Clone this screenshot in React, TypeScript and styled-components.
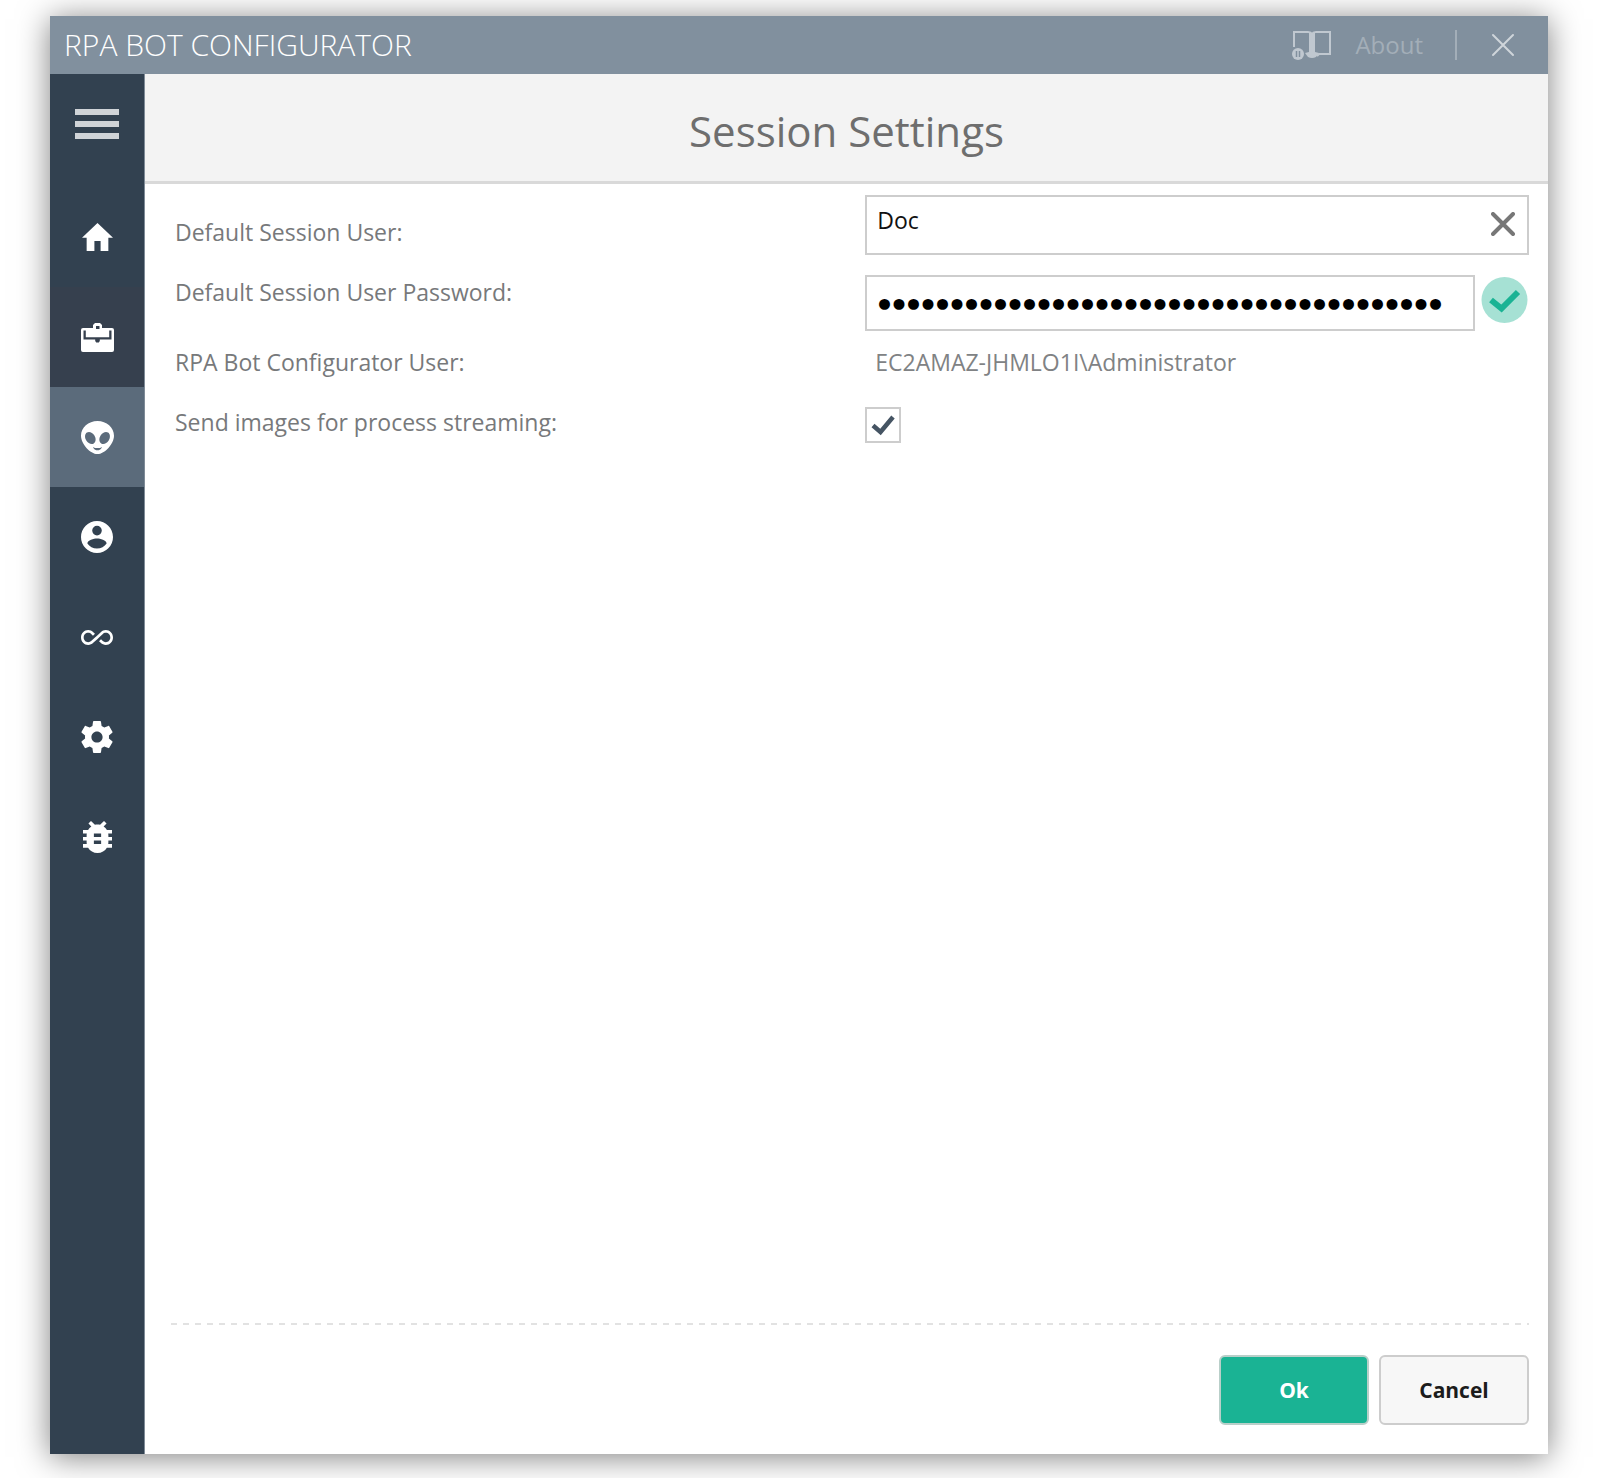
import React, { useState } from "react";
import styled, { createGlobalStyle } from "styled-components";

const GlobalStyle = createGlobalStyle`
  *, *::before, *::after { box-sizing: border-box; }
  body { margin: 0; background: #fff; }
  body, button, input { font-family: "Open Sans", "Noto Sans", sans-serif; }
`;

const Page = styled.div`
  display: flex;
  min-height: 100vh;
  padding: 16px 50px 24px;
`;

const Window = styled.div`
  flex: 1;
  display: flex;
  flex-direction: column;
  background: #fff;
  box-shadow: 0 3px 30px rgba(0, 0, 0, 0.5);
`;

const TitleBar = styled.header`
  display: flex;
  align-items: center;
  height: 58px;
  padding: 0 33px 0 14px;
  background: #81909e;
`;

const AppName = styled.div`
  flex: 1;
  font-size: 30px;
  font-weight: 300;
  line-height: 40px;
  color: #fff;
`;

const TitleLink = styled.a`
  display: flex;
  align-items: center;
  gap: 23px;
  font-size: 24px;
  line-height: 34px;
  color: #a3aeb8;
  text-decoration: none;
`;

const Separator = styled.span`
  width: 2px;
  height: 30px;
  margin: 0 34px 0 32px;
  background: #a3aeb8;
`;

const IconButton = styled.button`
  display: grid;
  place-items: center;
  padding: 0;
  border: 0;
  background: none;
  cursor: pointer;
`;

const Body = styled.div`
  flex: 1;
  display: flex;
`;

const Sidebar = styled.nav`
  display: flex;
  flex-direction: column;
  flex: none;
  width: 95px;
  border-right: 1px solid #7f8b97;
  background: #324150;
`;

const MenuButton = styled.button`
  display: flex;
  flex-direction: column;
  align-items: center;
  justify-content: center;
  gap: 6px;
  height: 113px;
  padding: 0 0 14px;
  border: 0;
  background: none;
  cursor: pointer;
`;

const MenuBar = styled.span`
  width: 44px;
  height: 6px;
  background: #d0d4d8;
`;

const NavItem = styled.button<{ $bg?: string }>`
  display: grid;
  place-items: center;
  height: 100px;
  padding: 0;
  border: 0;
  background: ${(p) => p.$bg ?? "transparent"};
  cursor: pointer;
`;

const Main = styled.main`
  flex: 1;
  min-width: 0;
  display: flex;
  flex-direction: column;
`;

const PageHeader = styled.div`
  display: flex;
  align-items: center;
  justify-content: center;
  height: 110px;
  padding-top: 6px;
  border-bottom: 3px solid #d9d9d9;
  background: #f3f3f3;
`;

const Heading = styled.h1`
  margin: 0;
  font-size: 42px;
  font-weight: 400;
  line-height: 60px;
  color: #6e6e6e;
`;

const Form = styled.form`
  flex: 1;
  display: flex;
  flex-direction: column;
  padding: 11px 19px 29px 30px;
`;

const Row = styled.div<{ $height: number }>`
  display: grid;
  grid-template-columns: minmax(0, 1.04fr) minmax(0, 1fr);
  align-items: start;
  min-height: ${(p) => p.$height}px;
`;

const Label = styled.label<{ $lowered?: boolean }>`
  padding-top: ${(p) => (p.$lowered ? 20 : 0)}px;
  font-size: 23px;
  line-height: 34px;
  color: #77797b;
`;

const Value = styled.output`
  padding-left: 10px;
  font-size: 23px;
  line-height: 34px;
  color: #808284;
`;

const TextBox = styled.div`
  display: flex;
  align-items: stretch;
  height: 60px;
  padding: 0 12px 3px 10px;
  border: 2px solid #cdcdcd;
`;

const TextInput = styled.input`
  flex: 1;
  min-width: 0;
  padding: 0 0 7px;
  border: 0;
  outline: 0;
  background: none;
  font-size: 23px;
  color: #111;
`;

const PasswordLine = styled.div`
  display: flex;
  align-items: flex-start;
  gap: 6px;
`;

const PasswordInput = styled.input`
  flex: 1;
  min-width: 0;
  height: 56px;
  padding: 0 10px 2px;
  border: 2px solid #cdcdcd;
  outline: 0;
  font-family: Lato, sans-serif;
  font-size: 25px;
  font-weight: 700;
  color: #000;
`;

const Tick = styled.span`
  position: relative;
  width: 36px;
  height: 36px;
  margin-top: 2px;
`;

const Checkbox = styled.input`
  appearance: none;
  display: block;
  width: 36px;
  height: 36px;
  margin: 0;
  border: 2px solid #cdcdcd;
  background: #fff;
  cursor: pointer;

  & + svg { visibility: hidden; }
  &:checked + svg { visibility: visible; }
`;

const TickMark = styled.svg`
  position: absolute;
  inset: 0;
  pointer-events: none;
`;

const Footer = styled.div`
  display: flex;
  justify-content: flex-end;
  gap: 10px;
  margin: auto 0 0 -4px;
  padding-top: 32px;
  background: repeating-linear-gradient(90deg, #e2e2e2 0 6px, transparent 6px 12px) top / 100% 2px no-repeat;
`;

const Button = styled.button<{ $primary?: boolean }>`
  width: 150px;
  height: 70px;
  padding: 0;
  border: 2px solid ${(p) => (p.$primary ? "#b9cfc9" : "#cdcdcd")};
  border-radius: 6px;
  background: ${(p) => (p.$primary ? "#1ab394" : "#f7f7f7")};
  font-size: 21px;
  font-weight: 700;
  color: ${(p) => (p.$primary ? "#fff" : "#1c1c1c")};
  cursor: pointer;
`;

type Glyph = { name: string; w: number; h: number; box: string; path: string; bg?: string };

const glyphs: Glyph[] = [
  { name: "Home", w: 31, h: 28, box: "2 3 20 17", path: "M10 20v-6h4v6h5v-8h3L12 3 2 12h3v8z" },
  {
    name: "Jobs", w: 33, h: 29, box: "0 0 33 29", bg: "#36404e",
    path: "M12 5V2l2-2h5l2 2v3h10q2 0 2 2v20q0 2-2 2H2q-2 0-2-2V7q0-2 2-2zM15 3v3h3.500V3zM2.500 7.500v9H14.200v1.500l1 1.500h2.600l1-1.500v-1.500H30.500v-9h-2.300v6.700H4.800V7.500z",
  },
  {
    name: "Session", w: 33, h: 33, box: "3 3 18 18", bg: "#5b6b7b",
    path: "M12,3C16.97,3 21,6.58 21,11C21,15.42 16,21 12,21C8,21 3,15.42 3,11C3,6.58 7.03,3 12,3M10.31,10.93C9.29,9.29 7.47,8.58 6.25,9.34C5.03,10.1 4.87,12.05 5.89,13.69C6.92,15.33 8.74,16.04 9.96,15.28C11.18,14.5 11.33,12.57 10.31,10.93M13.69,10.93C12.67,12.57 12.82,14.5 14.04,15.28C15.26,16.04 17.08,15.33 18.11,13.69C19.13,12.05 18.97,10.1 17.75,9.34C16.53,8.58 14.71,9.29 13.69,10.93M12,17.75C10,17.75 9.5,17 9.5,17C9.5,17.03 10,19 12,19C14,19 14.5,17 14.5,17C14.5,17 14,17.75 12,17.75Z",
  },
  {
    name: "Account", w: 32, h: 32, box: "2 2 20 20",
    path: "M12,19.2C9.5,19.2 7.29,17.92 6,16C6.03,14 10,12.9 12,12.9C14,12.9 17.97,14 18,16C16.71,17.92 14.5,19.2 12,19.2M12,5A3,3 0 0,1 15,8A3,3 0 0,1 12,11A3,3 0 0,1 9,8A3,3 0 0,1 12,5M12,2A10,10 0 0,0 2,12A10,10 0 0,0 12,22A10,10 0 0,0 22,12C22,6.47 17.5,2 12,2Z",
  },
  {
    name: "Continuous", w: 32, h: 15, box: "0 6.6 24 10.8",
    path: "M18.6 6.62c-1.44 0-2.8.56-3.77 1.53L12 10.66 10.48 12h.01L7.8 14.39c-.64.64-1.49.99-2.4.99-1.87 0-3.39-1.51-3.39-3.38S3.53 8.62 5.4 8.62c.91 0 1.76.35 2.44 1.03l1.13 1 1.51-1.34L9.22 8.2C8.2 7.18 6.84 6.62 5.4 6.62 2.42 6.62 0 9.04 0 12s2.42 5.38 5.4 5.38c1.44 0 2.8-.56 3.77-1.53l2.83-2.5.01.01L13.52 12h-.01l2.69-2.39c.64-.64 1.49-.99 2.4-.99 1.87 0 3.39 1.51 3.39 3.38s-1.52 3.38-3.39 3.38c-.9 0-1.76-.35-2.44-1.03l-1.14-1.01-1.51 1.34 1.27 1.12c1.02 1.01 2.37 1.57 3.82 1.57 2.98 0 5.4-2.41 5.4-5.38s-2.42-5.37-5.4-5.37z",
  },
  {
    name: "Settings", w: 32, h: 32, box: "2 2 20 20",
    path: "M19.43 12.98c.04-.32.07-.64.07-.98s-.03-.66-.07-.98l2.11-1.65c.19-.15.24-.42.12-.64l-2-3.46c-.12-.22-.39-.3-.61-.22l-2.49 1c-.52-.4-1.08-.73-1.69-.98l-.38-2.65C14.46 2.18 14.25 2 14 2h-4c-.25 0-.46.18-.49.42l-.38 2.65c-.61.25-1.17.59-1.69.98l-2.49-1c-.23-.09-.49 0-.61.22l-2 3.46c-.13.22-.07.49.12.64l2.11 1.65c-.04.32-.07.65-.07.98s.03.66.07.98l-2.11 1.65c-.19.15-.24.42-.12.64l2 3.46c.12.22.39.3.61.22l2.49-1c.52.4 1.08.73 1.69.98l.38 2.65c.03.24.24.42.49.42h4c.25 0 .46-.18.49-.42l.38-2.65c.61-.25 1.17-.59 1.69-.98l2.49 1c.23.09.49 0 .61-.22l2-3.46c.12-.22.07-.49-.12-.64l-2.11-1.65zM12 15.5c-1.93 0-3.5-1.57-3.5-3.5s1.57-3.5 3.5-3.5 3.5 1.57 3.5 3.5-1.57 3.5-3.5 3.5z",
  },
  {
    name: "Diagnostics", w: 29, h: 32, box: "4 3 16 18",
    path: "M14,12H10V10H14M14,16H10V14H14M20,8H17.19C16.74,7.22 16.12,6.55 15.37,6.04L17,4.41L15.59,3L13.42,5.17C12.96,5.06 12.5,5 12,5C11.5,5 11.05,5.06 10.59,5.17L8.41,3L7,4.41L8.62,6.04C7.88,6.55 7.26,7.22 6.81,8H4V10H6.09C6.04,10.33 6,10.66 6,11V12H4V14H6V15C6,15.34 6.04,15.67 6.09,16H4V18H6.81C7.85,19.79 9.78,21 12,21C14.22,21 16.15,19.79 17.19,18H20V16H17.91C17.96,15.67 18,15.34 18,15V14H20V12H18V11C18,10.66 17.96,10.33 17.91,10H20V8Z",
  },
];

const BookIcon = () => (
  <svg width="40" height="30" viewBox="0 0 40 30" fill="none" aria-hidden="true">
    <path d="M2 17V2h14q3 0 4 2 1-2 4-2h14v22H27l-2 2" stroke="#c0c8d0" strokeWidth="2" />
    <path d="M17 2l3 2 3-2v20l4 1-3 4q-4 2-8 0l-3-4 4-1z" fill="#c0c8d0" />
    <circle cx="6" cy="24" r="6" fill="#c0c8d0" />
    <path d="M4.500 21v6M7.500 21v6" stroke="#81909e" strokeWidth="1.500" />
  </svg>
);

const Cross = ({ color, weight }: { color: string; weight: number }) => (
  <svg width="24" height="24" viewBox="0 0 24 24" aria-hidden="true">
    <path d="M2 2l20 20M22 2L2 22" stroke={color} strokeWidth={weight} strokeLinecap="round" />
  </svg>
);

const ValidIcon = () => (
  <svg width="48" height="50" viewBox="0 0 48 50" role="img" aria-label="Password is valid">
    <circle cx="23.5" cy="25" r="23" fill="#a6e1d4" />
    <path d="M10 25l10.500 8.500L37 17" fill="none" stroke="#1ab394" strokeWidth="6" />
  </svg>
);

export default function App() {
  const [user, setUser] = useState("Doc");
  const [password, setPassword] = useState("x".repeat(39));
  const [streaming, setStreaming] = useState(true);

  return (
    <>
      <GlobalStyle />
      <Page>
        <Window>
          <TitleBar>
            <AppName>RPA BOT CONFIGURATOR</AppName>
            <TitleLink href="#about">
              <BookIcon />
              About
            </TitleLink>
            <Separator />
            <IconButton type="button" aria-label="Close">
              <Cross color="#cfd5da" weight={2} />
            </IconButton>
          </TitleBar>
          <Body>
            <Sidebar>
              <MenuButton type="button" aria-label="Menu">
                <MenuBar />
                <MenuBar />
                <MenuBar />
              </MenuButton>
              {glyphs.map((g) => (
                <NavItem key={g.name} type="button" aria-label={g.name} $bg={g.bg}>
                  <svg width={g.w} height={g.h} viewBox={g.box} preserveAspectRatio="none" aria-hidden="true">
                    <path d={g.path} fill="#fff" fillRule="evenodd" />
                  </svg>
                </NavItem>
              ))}
            </Sidebar>
            <Main>
              <PageHeader>
                <Heading>Session Settings</Heading>
              </PageHeader>
              <Form onSubmit={(e) => e.preventDefault()}>
                <Row $height={80}>
                  <Label htmlFor="user" $lowered>Default Session User:</Label>
                  <TextBox>
                    <TextInput id="user" value={user} onChange={(e) => setUser(e.target.value)} />
                    <IconButton type="button" aria-label="Clear" onClick={() => setUser("")}>
                      <Cross color="#777" weight={4} />
                    </IconButton>
                  </TextBox>
                </Row>
                <Row $height={70}>
                  <Label htmlFor="password">Default Session User Password:</Label>
                  <PasswordLine>
                    <PasswordInput
                      id="password"
                      type="password"
                      value={password}
                      onChange={(e) => setPassword(e.target.value)}
                    />
                    <ValidIcon />
                  </PasswordLine>
                </Row>
                <Row $height={60}>
                  <Label htmlFor="configurator">RPA Bot Configurator User:</Label>
                  <Value id="configurator">EC2AMAZ-JHMLO1I\Administrator</Value>
                </Row>
                <Row $height={60}>
                  <Label htmlFor="streaming">Send images for process streaming:</Label>
                  <Tick>
                    <Checkbox
                      id="streaming"
                      type="checkbox"
                      checked={streaming}
                      onChange={(e) => setStreaming(e.target.checked)}
                    />
                    <TickMark width="36" height="36" viewBox="0 0 36 36" aria-hidden="true">
                      <path d="M8 18.500l7.500 6.500L28 10" fill="none" stroke="#455463" strokeWidth="4.500" />
                    </TickMark>
                  </Tick>
                </Row>
                <Footer>
                  <Button type="submit" $primary>Ok</Button>
                  <Button type="button">Cancel</Button>
                </Footer>
              </Form>
            </Main>
          </Body>
        </Window>
      </Page>
    </>
  );
}
